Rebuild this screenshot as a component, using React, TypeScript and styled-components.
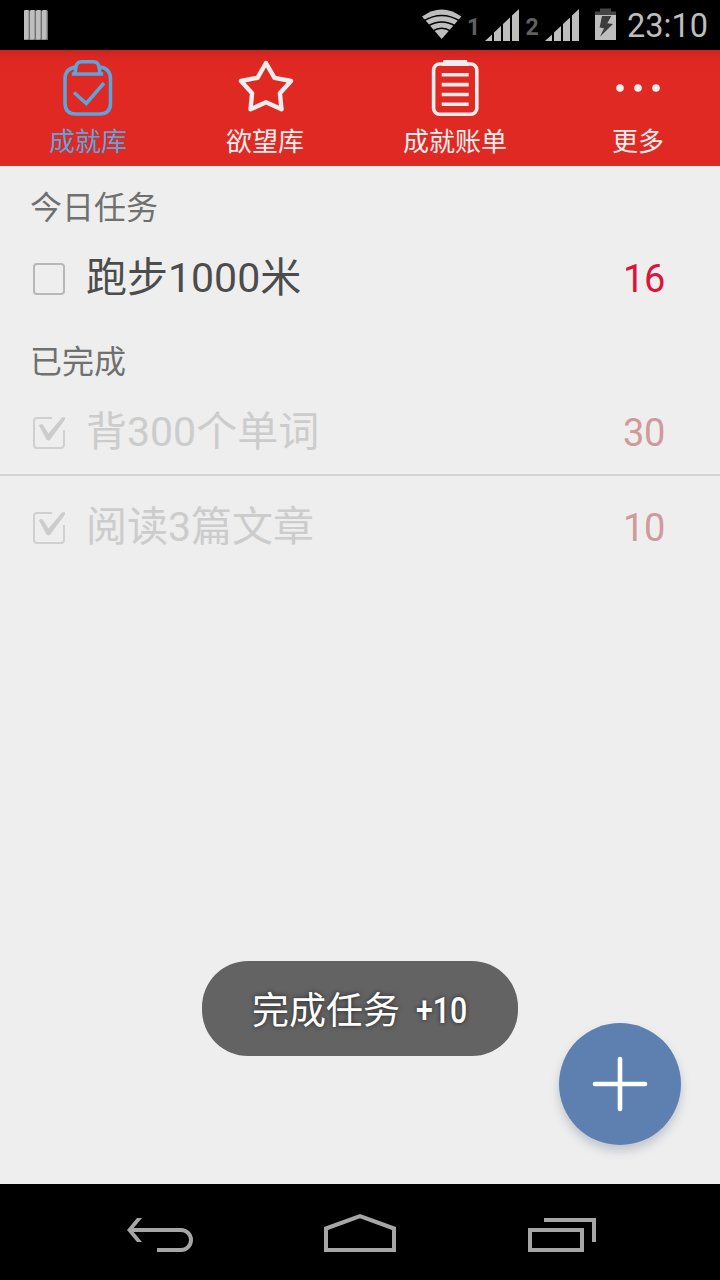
import React from 'react';
import styled, { createGlobalStyle } from 'styled-components';

const GlobalStyle = createGlobalStyle`
  * { box-sizing: border-box; }
  body { margin: 0; background: #eee; }
  button { border: 0; padding: 0; background: none; font: inherit; color: inherit; }
  svg { display: block; flex: none; }
`;

const Screen = styled.div`
  position: relative;
  display: flex;
  flex-direction: column;
  width: 720px;
  height: 1280px;
  overflow: hidden;
  background: #eee;
  font-family: Roboto, 'Noto Sans CJK SC', sans-serif;
`;

const StatusBar = styled.header`
  display: flex;
  align-items: center;
  justify-content: space-between;
  height: 50px;
  padding: 0 12px 0 24px;
  background: #000;
`;

const StatusIcons = styled.div`
  display: flex;
  align-items: center;
  height: 50px;
`;

const SimNumber = styled.span<{ $width: number }>`
  width: ${(p) => p.$width}px;
  padding-top: 5px;
  color: #606060;
  font-size: 23px;
  font-weight: 700;
  line-height: 28px;
  text-align: center;
`;

const Clock = styled.time`
  width: 81px;
  margin-left: 11px;
  color: #bebebe;
  font-size: 32.5px;
  line-height: 50px;
  padding-top: 2px;
  white-space: nowrap;
`;

const TabBar = styled.nav`
  display: grid;
  grid-template-columns: 176px 178px 202px 164px;
  height: 116px;
  background: linear-gradient(#c8231f 0, #d62722 4px, #df2822 14px, #e02923 22px);
`;

const Tab = styled.button<{ $active?: boolean }>`
  display: flex;
  flex-direction: column;
  align-items: center;
  padding-top: 8px;
  color: ${(p) => (p.$active ? '#5ba5dc' : '#eee')};
`;

const TabLabel = styled.span`
  margin-top: 5px;
  font-size: 26px;
  line-height: 38px;
`;

const TaskList = styled.main`
  flex: 1;
`;

const SectionTitle = styled.h2`
  height: 61px;
  margin: 0;
  padding: 11px 30px 0;
  color: #707070;
  font-size: 32px;
  font-weight: 400;
  line-height: 62px;
`;

const Row = styled.div<{ $divided?: boolean }>`
  display: flex;
  align-items: center;
  height: ${(p) => (p.$divided ? 95 : 93)}px;
  padding: 11px 55px 0 32px;
  border-bottom: ${(p) => (p.$divided ? '2px solid #d5d5d5' : '0')};
`;

const RowTitle = styled.span<{ $done?: boolean }>`
  flex: 1;
  margin: -2px 0 0 20px;
  color: ${(p) => (p.$done ? '#ccc' : '#4c4c4c')};
  font-size: 41px;
  line-height: 60px;
`;

const Points = styled.span<{ $done?: boolean }>`
  color: ${(p) => (p.$done ? '#cf9a9a' : '#dc143c')};
  font-size: 38px;
  line-height: 60px;
  letter-spacing: -0.3px;
`;

const Toast = styled.div`
  position: absolute;
  left: 202px;
  top: 961px;
  display: flex;
  align-items: center;
  width: 316px;
  height: 95px;
  padding: 7px 0 0 50px;
  border-radius: 46px;
  background: #636363;
  color: #fff;
  font-size: 37px;
  line-height: 60px;
  text-shadow: 0 0 5px rgba(0, 0, 0, 0.65);
  white-space: nowrap;
`;

const ToastPoints = styled.span`
  margin: -3px 0 0 16px;
  font-weight: 500;
  transform: scaleX(0.82);
  transform-origin: left center;
`;

const AddButton = styled.button`
  position: absolute;
  left: 559px;
  top: 1023px;
  display: grid;
  place-items: center;
  width: 122px;
  height: 122px;
  border-radius: 50%;
  background: #5e80b0;
  box-shadow: 0 6px 10px rgba(60, 75, 110, 0.25);
`;

const NavBar = styled.footer`
  display: flex;
  justify-content: center;
  height: 96px;
  background: #000;
`;

const NavButton = styled.button`
  display: grid;
  place-items: center;
  width: 200px;
`;

const NotificationIcon = () => (
  <svg width="24" height="30" viewBox="0 0 24 30">
    {[0, 6, 12, 18].map((x) => (
      <g key={x}>
        <rect x={x} y="0.5" width="6" height="29.5" fill="#707070" />
        <path d={`M${x} 1L${x + 1} 0H${x + 4.6}V28.5L${x + 3.6} 29.5H${x}z`} fill="#bebebe" />
      </g>
    ))}
  </svg>
);

const WifiIcon = () => (
  <svg width="40" height="50" viewBox="0 0 40 50">
    <path d="M0 16.5Q19.7 2.5 39.4 16.5L19.7 39z" fill="#bebebe" />
    <g fill="none" stroke="#000" strokeWidth="1.5">
      <path d="M1.5 21Q19.7 10 37.9 21" />
      <path d="M6 26Q19.7 18 33.4 26" />
      <path d="M10.5 31.2Q19.7 25.4 28.9 31.2" />
    </g>
  </svg>
);

const SignalIcon = () => (
  <svg width="34" height="50" viewBox="0 0 34 50">
    <path d="M0 41L7 34.4V41zM9 41V32.5L16 26V41zM18 41V24L25 17.5V41zM27 41V15.6L34 9V41z" fill="#bebebe" />
  </svg>
);

const BatteryIcon = () => (
  <svg width="21" height="50" viewBox="0 0 21 50">
    <path d="M5 8.5H16V11.5H21V15H0V11.5H5z" fill="#444" />
    <rect y="15" width="21" height="25" fill="#bebebe" />
    <path d="M7 16H16.3L12.3 23.2L18 24L5 36.7L9 28.2L4.6 27.4z" fill="#3c3c3c" />
  </svg>
);

const ClipboardIcon = () => (
  <svg width="60" height="60" viewBox="0 0 60 60" fill="none" stroke="currentColor" strokeWidth="3.5">
    <path d="M18 9Q7 10.5 7 21V45Q7 56 18 56H41.5Q52.5 56 52.5 45V21Q52.5 10.5 42 9" />
    <path d="M13.8 16H45.2M17 15L18 9Q18.8 3.8 23.5 3.8H35.5Q40.2 3.8 41 9L42 15" />
    <path d="M16 34.5L28.3 45.5L46 25" />
  </svg>
);

const StarIcon = () => (
  <svg width="60" height="60" viewBox="0 0 60 60">
    <path
      d="M31 5L39.5 19.8L56 23L44.9 35.3L46.5 51.3L31 44.3L15.5 51.3L17.1 35.3L6 23L22.5 19.8z"
      fill="none"
      stroke="currentColor"
      strokeWidth="4.4"
      strokeLinejoin="round"
    />
  </svg>
);

const BillIcon = () => (
  <svg width="60" height="60" viewBox="0 0 60 60" fill="none" stroke="currentColor" strokeWidth="3.6">
    <rect x="8.6" y="6" width="43.2" height="50.3" rx="6" />
    <path d="M18.5 2H42L43.5 8H17z" fill="currentColor" stroke="none" />
    <path d="M16.7 16.7H43.7M16.7 26.6H43.7M16.7 36.5H43.7M16.7 46.3H43.7" />
  </svg>
);

const MoreIcon = () => (
  <svg width="60" height="60" viewBox="0 0 60 60" fill="currentColor">
    <circle cx="12" cy="30" r="3.8" />
    <circle cx="30" cy="30" r="3.8" />
    <circle cx="48" cy="30" r="3.8" />
  </svg>
);

const Checkbox = ({ checked }: { checked?: boolean }) => (
  <svg width="34" height="34" viewBox="0 0 34 34" fill="none">
    {checked ? (
      <>
        <path d="M20 2H5Q2 2 2 5V29Q2 32 5 32H29Q32 32 32 29V14" stroke="#d0d0d0" strokeWidth="2" />
        <path d="M7 9.5L8 8.3H10.5L16.5 17.5L30.3 1.2H33V3.5L18.3 23.5Q16.4 25.5 14.5 23.5z" fill="#ccc" />
      </>
    ) : (
      <rect x="2" y="2" width="30" height="30" rx="3" stroke="#b8b8b8" strokeWidth="2" />
    )}
  </svg>
);

const tabs = [
  { label: '成就库', Icon: ClipboardIcon, active: true },
  { label: '欲望库', Icon: StarIcon },
  { label: '成就账单', Icon: BillIcon },
  { label: '更多', Icon: MoreIcon },
];

const sections = [
  { title: '今日任务', tasks: [{ name: '跑步1000米', points: 16, done: false }] },
  {
    title: '已完成',
    tasks: [
      { name: '背300个单词', points: 30, done: true },
      { name: '阅读3篇文章', points: 10, done: true },
    ],
  },
];

export default function App() {
  return (
    <Screen>
      <GlobalStyle />
      <StatusBar>
        <NotificationIcon />
        <StatusIcons>
          <WifiIcon />
          <SimNumber $width={23}>1</SimNumber>
          <SignalIcon />
          <SimNumber $width={26}>2</SimNumber>
          <SignalIcon />
          <SimNumber $width={16} />
          <BatteryIcon />
          <Clock>23:10</Clock>
        </StatusIcons>
      </StatusBar>
      <TabBar>
        {tabs.map(({ label, Icon, active }) => (
          <Tab key={label} $active={active}>
            <Icon />
            <TabLabel>{label}</TabLabel>
          </Tab>
        ))}
      </TabBar>
      <TaskList>
        {sections.map(({ title, tasks }) => (
          <section key={title}>
            <SectionTitle>{title}</SectionTitle>
            {tasks.map((task, i) => (
              <Row key={task.name} $divided={i < tasks.length - 1}>
                <Checkbox checked={task.done} />
                <RowTitle $done={task.done}>{task.name}</RowTitle>
                <Points $done={task.done}>{task.points}</Points>
              </Row>
            ))}
          </section>
        ))}
      </TaskList>
      <NavBar>
        <NavButton aria-label="返回">
          <svg width="80" height="48" viewBox="0 0 80 48">
            <path d="M7 22L17 10H22L12 22L22 34H17z" fill="#a6a6a6" />
            <path d="M10 22H61A10 10 0 0 1 61 42H37" fill="none" stroke="#a6a6a6" strokeWidth="4" />
          </svg>
        </NavButton>
        <NavButton aria-label="主页">
          <svg width="80" height="48" viewBox="0 0 80 48">
            <path d="M6 20.5L40 8.2L74 20.5V42H6z" fill="none" stroke="#a6a6a6" strokeWidth="4" />
          </svg>
        </NavButton>
        <NavButton aria-label="最近">
          <svg width="80" height="48" viewBox="0 0 80 48" fill="none" stroke="#a6a6a6" strokeWidth="4">
            <rect x="10" y="22" width="52" height="20" />
            <path d="M24 12H74V34" />
          </svg>
        </NavButton>
      </NavBar>
      <Toast>
        完成任务<ToastPoints>+10</ToastPoints>
      </Toast>
      <AddButton aria-label="添加">
        <svg width="56" height="56" viewBox="0 0 56 56" stroke="#fff" strokeWidth="4.6" strokeLinecap="round">
          <path d="M28 3V53M3 28H53" />
        </svg>
      </AddButton>
    </Screen>
  );
}
